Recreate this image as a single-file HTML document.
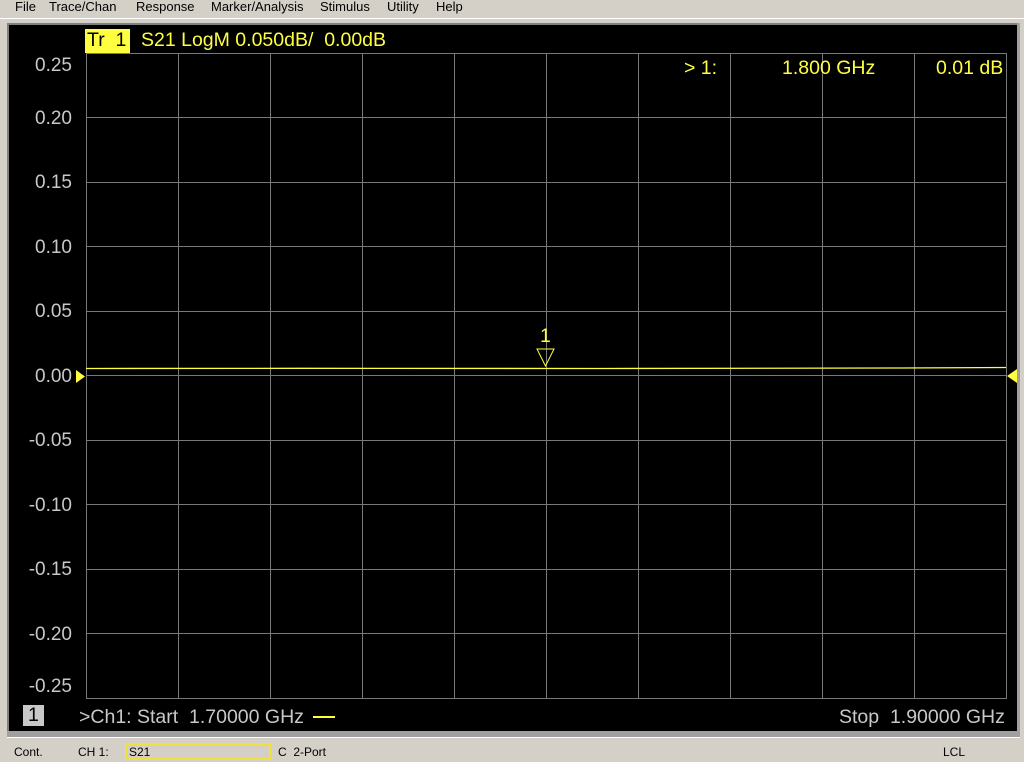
<!DOCTYPE html>
<html><head><style>
body{margin:0;width:1024px;height:762px;background:#d4d0c8;position:relative;overflow:hidden;font-family:"Liberation Sans",sans-serif}
.m{position:absolute;top:-1px;font-size:13px;color:#000}
.scr{position:absolute;left:7px;top:23px;width:1011px;height:709px;background:#000;border-top:2px solid #808080;border-left:2px solid #808080;box-sizing:border-box}
.t{position:absolute;font-size:19.5px;white-space:nowrap}
.y{color:#ffff40}.g{color:#c8c8c8}
.lab{position:absolute;left:10px;width:62px;text-align:right;font-size:19px;color:#c8c8c8}
.s{position:absolute;top:745px;font-size:12px;color:#000}
</style></head><body>
<div class="m" style="left:15px">File</div>
<div class="m" style="left:49px">Trace/Chan</div>
<div class="m" style="left:136px">Response</div>
<div class="m" style="left:211px">Marker/Analysis</div>
<div class="m" style="left:320px">Stimulus</div>
<div class="m" style="left:387px">Utility</div>
<div class="m" style="left:436px">Help</div>
<div style="position:absolute;left:0;top:18px;width:1024px;height:1px;background:#fff"></div>
<div class="scr"></div>
<div style="position:absolute;left:1017px;top:23px;width:3px;height:712px;background:#a0a0a0"></div>
<div style="position:absolute;left:7px;top:731px;width:1013px;height:6px;background:#a0a0a0;border-bottom:1px solid #fff"></div>
<div style="position:absolute;left:85px;top:29px;width:45px;height:24px;background:#ffff40"></div>
<div class="t" style="left:87px;top:29px;color:#000">Tr&nbsp; 1</div>
<div class="t y" style="left:141px;top:29px">S21 LogM 0.050dB/&nbsp; 0.00dB</div>
<svg style="position:absolute;left:0;top:0" width="1024" height="762">
<g stroke="#787878" stroke-width="1" fill="none">
<rect x="86.5" y="53.5" width="920" height="645"/>
<path d="M178.5 53v645M270.5 53v645M362.5 53v645M454.5 53v645M546.5 53v645M638.5 53v645M730.5 53v645M822.5 53v645M914.5 53v645
M86 117.5h920M86 182.5h920M86 246.5h920M86 311.5h920M86 375.5h920M86 440.5h920M86 504.5h920M86 569.5h920M86 633.5h920"/>
</g>
<path d="M86 368.5L300 368.3 600 368.5 900 368 1006 367.5" stroke="#ffff40" stroke-width="1.3" fill="none"/>
<path d="M537 349h17l-8.5 17z" stroke="#ffff40" fill="none"/>
<path d="M76 370v13l9-6.5z" fill="#ffff40"/>
<path d="M1017 369v14l-10-7z" fill="#ffff40"/>
<rect x="23" y="705" width="21" height="21" fill="#c8c8c8"/>
<rect x="313" y="716" width="22" height="2" fill="#ffff40"/>
</svg>
<div class="t y" style="left:540px;top:325px">1</div>
<div class="t y" style="left:684px;top:57px">&gt; 1:</div>
<div class="t y" style="left:782px;top:57px">1.800 GHz</div>
<div class="t y" style="left:936px;top:57px">0.01 dB</div>
<div class="lab" style="top:55px">0.25</div>
<div class="lab" style="top:108px">0.20</div>
<div class="lab" style="top:172px">0.15</div>
<div class="lab" style="top:237px">0.10</div>
<div class="lab" style="top:301px">0.05</div>
<div class="lab" style="top:366px">0.00</div>
<div class="lab" style="top:430px">-0.05</div>
<div class="lab" style="top:495px">-0.10</div>
<div class="lab" style="top:559px">-0.15</div>
<div class="lab" style="top:624px">-0.20</div>
<div class="lab" style="top:676px">-0.25</div>
<div class="t" style="left:28px;top:704px;color:#000">1</div>
<div class="t g" style="left:79px;top:706px">&gt;Ch1: Start&nbsp; 1.70000 GHz</div>
<div class="t g" style="left:839px;top:706px">Stop&nbsp; 1.90000 GHz</div>
<div class="s" style="left:14px">Cont.</div>
<div class="s" style="left:78px">CH 1:</div>
<div style="position:absolute;left:125px;top:743px;width:146px;height:17px;border:2px solid #f0e040;box-sizing:border-box"></div>
<div class="s" style="left:129px">S21</div>
<div class="s" style="left:278px">C&nbsp; 2-Port</div>
<div class="s" style="left:943px">LCL</div>
</body></html>
